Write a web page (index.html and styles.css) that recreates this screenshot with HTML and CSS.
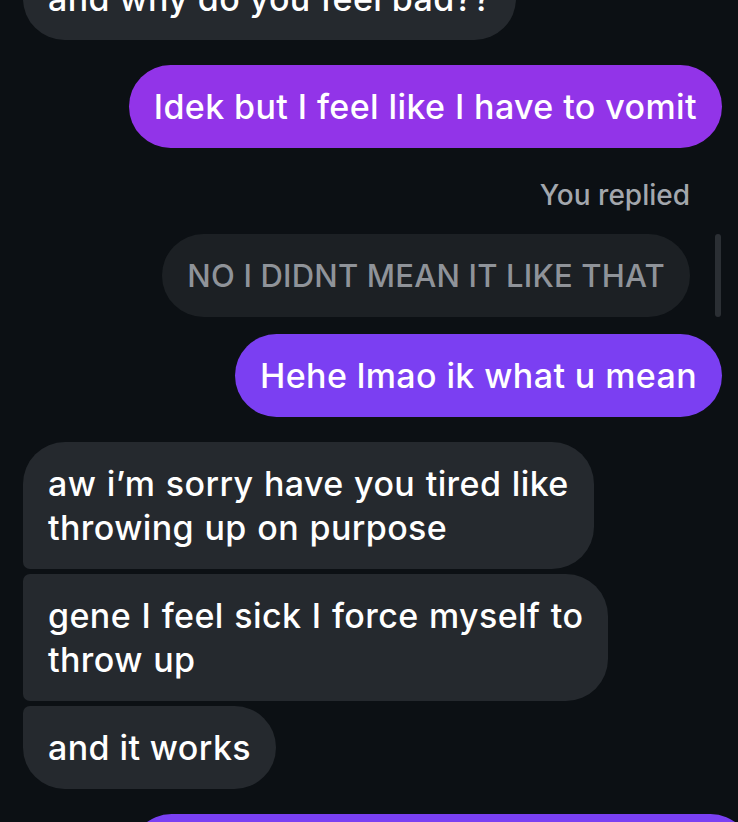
FILE: index.html
```html
<!DOCTYPE html>
<html>
<head>
<meta charset="utf-8">
<link rel="stylesheet" href="styles.css">
</head>
<body>
<div class="thread">
  <div class="row in first">
    <div class="bubble grey solo">and why do you feel bad??</div>
  </div>
  <div class="row out gap-l">
    <div class="bubble purple p1">Idek but I feel like I have to vomit</div>
  </div>
  <div class="replied">You replied</div>
  <div class="row out reply-row">
    <div class="bubble quoted">NO I DIDNT MEAN IT LIKE THAT</div>
    <div class="reply-bar"></div>
  </div>
  <div class="row out gap-s">
    <div class="bubble purple p2">Hehe lmao ik what u mean</div>
  </div>
  <div class="row in gap-m">
    <div class="bubble grey g-top">aw i’m sorry have you tired like<br>throwing up on purpose</div>
  </div>
  <div class="row in gap-xs">
    <div class="bubble grey g-mid">gene I feel sick I force myself to<br>throw up</div>
  </div>
  <div class="row in gap-xs">
    <div class="bubble grey g-bot">and it works</div>
  </div>
  <div class="row out gap-m2">
    <div class="bubble purple p3">&nbsp;</div>
  </div>
</div>
</body>
</html>
```
FILE: styles.css
```css
html, body {
  margin: 0;
  padding: 0;
  background: #0c1014;
  overflow: hidden;
  height: 822px;
}
body {
  font-family: Inter, Roboto, "Noto Sans", sans-serif;
  color: #fff;
}
.thread {
  display: flex;
  flex-direction: column;
  padding: 0 16px 0 23px;
}
.row {
  display: flex;
}
.row.in { justify-content: flex-start; }
.row.out { justify-content: flex-end; }
.first { margin-top: -43px; }
.gap-l { margin-top: 25px; }
.gap-s { margin-top: 17px; }
.gap-m { margin-top: 25px; }
.gap-xs { margin-top: 5px; }
.gap-m2 { margin-top: 25px; }

.bubble {
  font-size: 34px;
  font-weight: 500;
  letter-spacing: 0.4px;
  line-height: 44px;
  padding: 19.5px 25px;
  border-radius: 42px;
  white-space: nowrap;
}
.grey { background: #25292e; }
.purple { background: #9234e8; }
.p1 { background: #9234e8; }
.p2 { background: #7b3ff2; }
.p3 { background: #7a40f3; width: 572px; margin-right: -30px; }

.g-top { border-radius: 42px 42px 42px 7px; word-spacing: 1px; }
.g-mid { border-radius: 7px 42px 42px 7px; word-spacing: 1px; }
.g-bot { border-radius: 7px 42px 42px 42px; }

.replied {
  text-align: right;
  padding-right: 32px;
  margin-top: 30px;
  font-size: 28px;
  font-weight: 500;
  line-height: 34px;
  color: #a3a7ad;
}
.reply-row {
  margin-top: 22px;
  align-items: stretch;
  gap: 25px;
}
.quoted {
  background: #1c2024;
  color: #8f9399;
  font-size: 31px;
  letter-spacing: 0.2px;
}
.reply-bar {
  width: 6px;
  border-radius: 3px;
  background: #2b2f34;
  margin-right: 1px;
}
```
